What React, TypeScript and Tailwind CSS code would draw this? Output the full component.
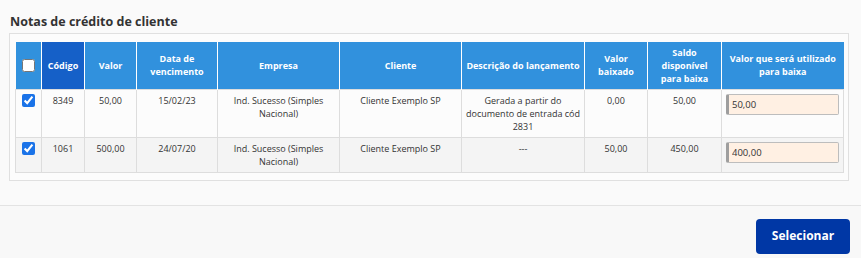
import { useState } from "react";

type Nota = {
  codigo: string;
  valor: string;
  vencimento: string;
  empresa: string;
  cliente: string;
  descricao: string;
  baixado: string;
  saldo: string;
  utilizar: string;
};

const NOTAS: Nota[] = [
  {
    codigo: "8349",
    valor: "50,00",
    vencimento: "15/02/23",
    empresa: "Ind. Sucesso (Simples Nacional)",
    cliente: "Cliente Exemplo SP",
    descricao: "Gerada a partir do documento de entrada cód 2831",
    baixado: "0,00",
    saldo: "50,00",
    utilizar: "50,00",
  },
  {
    codigo: "1061",
    valor: "500,00",
    vencimento: "24/07/20",
    empresa: "Ind. Sucesso (Simples Nacional)",
    cliente: "Cliente Exemplo SP",
    descricao: "---",
    baixado: "50,00",
    saldo: "450,00",
    utilizar: "400,00",
  },
];

const COLS = [26, 43, 52, 81, 122, 122, 123, 63, 74, 122];

export default function App() {
  const [selected, setSelected] = useState<boolean[]>([true, true]);
  const [values, setValues] = useState(NOTAS.map((n) => n.utilizar));

  const th = "border-x border-white px-1 text-center align-middle font-bold";
  const td = "border border-[#dddddd] px-[2px] pt-[4px] pb-[4px] text-center align-top";

  return (
    <div
      className="flex min-h-[258px] flex-col bg-[#fafafa] text-[#333333]"
      style={{ fontFamily: '"Open Sans", "Liberation Sans", sans-serif' }}
    >
      <div className="px-[9px] pt-[13px] pb-6">
        <h2 className="mb-[2px] pl-px text-[12.5px] leading-[18px] font-bold text-[#333333]">
          Notas de crédito de cliente
        </h2>

        <div className="mr-[3px] border border-[#e0e0e0] bg-[#fcfcfc] px-[5px] pt-[8px] pb-[7px]">
          <table className="w-[828px] table-fixed border-collapse text-[9px] leading-[13px]">
            <colgroup>
              {COLS.map((w, i) => (
                <col key={i} style={{ width: w }} />
              ))}
            </colgroup>
            <thead>
              <tr className="h-[47px] bg-[#3191dd] text-white">
                <th className="border-r border-white text-center align-middle">
                  <input type="checkbox" className="mt-[3px] h-[13px] w-[13px]" readOnly />
                </th>
                <th className={`${th} bg-[#1560c8]`}>Código</th>
                <th className={th}>Valor</th>
                <th className={th}>
                  Data de
                  <br />
                  vencimento
                </th>
                <th className={th}>Empresa</th>
                <th className={th}>Cliente</th>
                <th className={`${th} whitespace-nowrap`}>Descrição do lançamento</th>
                <th className={th}>
                  Valor
                  <br />
                  baixado
                </th>
                <th className={th}>
                  Saldo
                  <br />
                  disponível
                  <br />
                  para baixa
                </th>
                <th className="border-l border-white px-1 text-center align-middle font-bold">
                  Valor que será utilizado
                  <br />
                  para baixa
                </th>
              </tr>
            </thead>
            <tbody>
              {NOTAS.map((n, i) => (
                <tr key={n.codigo} className={i % 2 === 0 ? "bg-[#fcfcfc]" : "bg-[#f4f4f4]"}>
                  <td className="border border-[#dddddd] pt-[4px] text-center align-top">
                    <input
                      type="checkbox"
                      className="h-[13px] w-[13px] accent-[#1a73e8]"
                      checked={selected[i]}
                      onChange={() =>
                        setSelected((prev) => prev.map((v, j) => (j === i ? !v : v)))
                      }
                    />
                  </td>
                  <td className={td}>{n.codigo}</td>
                  <td className={td}>{n.valor}</td>
                  <td className={td}>{n.vencimento}</td>
                  <td className={td}>{n.empresa}</td>
                  <td className={td}>{n.cliente}</td>
                  <td className={td}>{n.descricao}</td>
                  <td className={td}>{n.baixado}</td>
                  <td className={td}>{n.saldo}</td>
                  <td className="border border-[#dddddd] px-[4px] pt-[4px] align-top">
                    <input
                      type="text"
                      value={values[i]}
                      onChange={(e) =>
                        setValues((prev) => prev.map((v, j) => (j === i ? e.target.value : v)))
                      }
                      className="h-[21px] w-full rounded-[2px] border border-l-[3px] border-[#bdbdbd] border-l-[#9e9e9e] bg-[#fff0e3] px-[3px] text-[9.5px] text-[#333333] outline-none"
                    />
                  </td>
                </tr>
              ))}
            </tbody>
          </table>
        </div>
      </div>

      <div className="flex flex-1 justify-end border-t border-[#e3e3e3] bg-[#f8f8f8] pt-[13px] pr-[11px] pb-[4px]">
        <button
          type="button"
          className="h-[35px] w-[94px] rounded-[4px] bg-[#0037a5] text-[12px] font-bold text-white"
        >
          Selecionar
        </button>
      </div>
    </div>
  );
}
